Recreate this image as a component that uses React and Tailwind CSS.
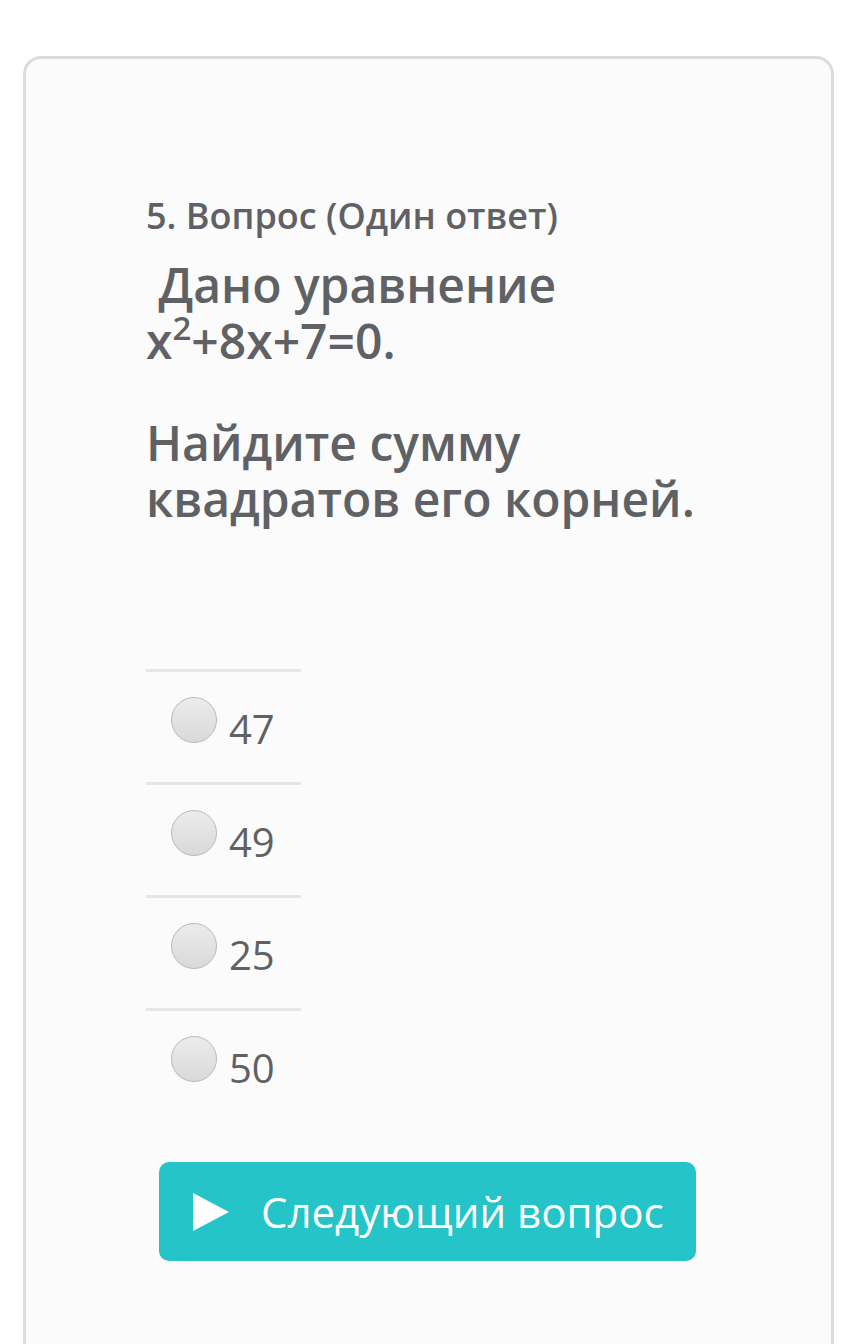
import { useState } from 'react';

const options = ['47', '49', '25', '50'];

const App = () => {
  const [selected, setSelected] = useState(null);

  return (
    <div className="min-h-[1344px] bg-white pt-[56px] pl-[23px] overflow-hidden" style={{ fontFamily: '"Open Sans", sans-serif' }}>
      <div className="w-[811px] h-[1320px] rounded-t-[18px] border-[3px] border-b-0 border-[#dcdcdc] bg-[#fbfbfb] pl-[120px] pt-[134px]">
        <div className="text-[36px] font-semibold leading-[46px] text-[#606164]">5. Вопрос (Один ответ)</div>

        <div className="mt-[18px] w-[580px] text-[48px] font-semibold leading-[56px] text-[#606164]">
          <p>&nbsp;Дано уравнение x<sup className="text-[33px] leading-none align-baseline relative -top-[19px]">2</sup>+8x+7=0.</p>
          <p className="mt-[46px]">Найдите сумму квадратов его корней.</p>
        </div>

        <div className="mt-[142px] w-[155px]">
          {options.map((opt) => (
            <button
              key={opt}
              type="button"
              onClick={() => setSelected(opt)}
              className="flex h-[113px] w-full items-start border-t-[3px] border-[#e6e6e6] pl-[25px] pt-[25px] text-left"
            >
              <span className="flex h-[46px] w-[46px] shrink-0 items-center justify-center rounded-full border border-[#b9b9b9] bg-gradient-to-b from-[#ececec] to-[#d9d9d9]">
                {selected === opt && <span className="h-[18px] w-[18px] rounded-full bg-[#606164]" />}
              </span>
              <span className="ml-[12px] mt-[6px] text-[40px] leading-[52px] text-[#606164]">{opt}</span>
            </button>
          ))}
        </div>

        <button
          type="button"
          className="mt-[41px] ml-[13px] flex h-[99px] w-[537px] items-center rounded-[10px] bg-[#25c4c9] pl-[34px] text-white"
        >
          <svg width="36" height="38" viewBox="0 0 36 38">
            <polygon points="0,0 36,19 0,38" fill="#ffffff" />
          </svg>
          <span className="ml-[32px] text-[42px] leading-[56px]">Следующий вопрос</span>
        </button>
      </div>
    </div>
  );
};

export default App;
